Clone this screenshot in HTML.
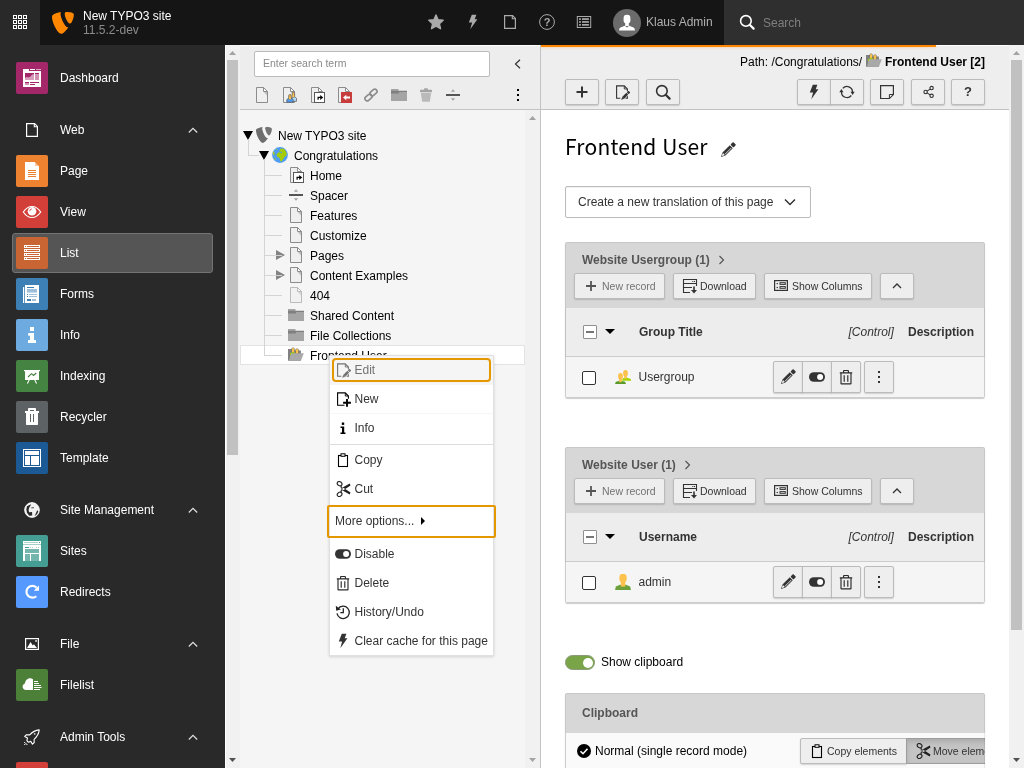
<!DOCTYPE html><html lang="en"><head><meta charset="utf-8"><title>Frontend User - TYPO3 CMS</title><style>*{box-sizing:border-box;margin:0;padding:0}
html,body{width:1024px;height:768px;overflow:hidden;background:#fff}
body{will-change:transform;font-family:"Liberation Sans",Arial,sans-serif;font-size:12px;color:#000;position:relative;line-height:16px}
svg{display:block}
i{display:block;font-style:normal}
/* topbar */
#topbar{position:absolute;left:0;top:0;width:1024px;height:45px;background:#151515}
#tgl{position:absolute;left:0;top:0;width:40px;height:45px;background:#292929}
#tgl svg{position:absolute;left:12px;top:14px}
#logo{position:absolute;left:52px;top:12px}
#site{position:absolute;left:83px;top:8px;color:#fff;line-height:14px}
#site .sn{font-size:12px;position:absolute;top:1px;white-space:nowrap}
#site .sv{font-size:12px;color:#8c8c8c;position:absolute;top:15px;white-space:nowrap}
.ti{position:absolute;top:14px;width:16px;height:16px}
#avatar{position:absolute;left:613px;top:9px;width:28px;height:28px;border-radius:50%;background:#6b6b6b;overflow:hidden}
#uname{position:absolute;left:646px;top:14px;color:#b0b0b0;white-space:nowrap}
#search{position:absolute;left:724px;top:0;width:300px;height:45px;background:#2f2f2f}
#search .si{position:absolute;left:15px;top:14px}
#search .sp{position:absolute;left:39px;top:15px;color:#7f7f7f}
/* sidebar */
#side{position:absolute;left:0;top:45px;width:225px;height:723px;background:#292929;overflow:hidden}
.mod{position:absolute;left:12px;width:201px;height:40px;border:1px solid transparent;border-radius:3px;color:#fff;margin-top:-45px}
.mod.act{background:#555;border-color:#737373}
.mi{position:absolute;left:3px;top:3px;width:32px;height:32px;border-radius:2px;overflow:hidden}
.ml{position:absolute;left:47px;top:11px;white-space:nowrap;color:#fff}
.mh{position:absolute;left:12px;width:201px;height:20px;margin-top:-45px}
.mh .ml{top:2px;left:48px}
.mhi{position:absolute;left:12px;top:2px;width:16px;height:16px}
.mchev{position:absolute;left:176px;top:2px}
/* scrollbar */
.sb{position:absolute;width:15px;background:#f1f1f1}
.sb .th{position:absolute;left:2px;width:11px;background:#c1c1c1}
.sb .up,.sb .dn{position:absolute;left:4px;width:7px;height:4px}
.sb .up{top:6px;background:#a3a3a3;clip-path:polygon(50% 0,100% 100%,0 100%)}
.sb .dn{bottom:6px;background:#505050;clip-path:polygon(0 0,100% 0,50% 100%)}
/* tree */
#tree{position:absolute;left:240px;top:45px;width:300px;height:723px;background:#f5f5f5;overflow:hidden}
#ttool{position:absolute;left:0;top:0;width:300px;height:65px;background:#ededed;border-bottom:1px solid #c3c3c3;border-top:1px solid #fff}
.inp{position:absolute;left:14px;top:5px;width:236px;height:26px;border:1px solid #bbb;border-radius:2px;background:#fff;color:#8a8a8a;padding:3px 8px;line-height:16px;font-size:10.5px}
.tcl{position:absolute;left:274px;top:13px}
.tbi{position:absolute;top:41px;width:16px;height:16px}
.tdots{position:absolute;left:277px;top:43px;width:2px}
.tdots i{width:2px;height:2px;background:#000;margin-bottom:3px}
.tr{position:absolute;left:0;width:285px;height:20px;margin-top:-45px}
.tr.sel{background:#fff;border:1px solid #e3e3e3}
.tr.sel>*{margin-top:-1px;margin-left:-1px}
.tic{position:absolute;top:2px;width:16px;height:16px}
.tl{position:absolute;top:3px;white-space:nowrap;color:#000}
.tg{position:absolute;width:0;height:0}
.tg.open{top:6px;border-left:5px solid transparent;border-right:5px solid transparent;border-top:9px solid #000}
.tg.closed{top:5px;border-top:5px solid transparent;border-bottom:5px solid transparent;border-left:9px solid #848484}
.ln{position:absolute;background:#d4d4d4;z-index:2}
#tree>.ln{margin-top:-45px}
.ln.v{width:1px}
.ln.h{height:1px}
#vdiv{position:absolute;left:540px;top:45px;width:1px;height:723px;background:#c3c3c3}
/* content */
#content{position:absolute;left:541px;top:45px;width:468px;height:723px;background:#fff;overflow:hidden}
#prog{position:absolute;left:0;top:0;width:395px;height:2px;background:#ff8700;z-index:3;box-shadow:0 0 3px rgba(255,135,0,.45)}
#dochead{position:absolute;left:0;top:0;width:468px;height:65px;background:#eee;border-bottom:1px solid #c3c3c3;border-top:1px solid #fff}#dochead>*{margin-top:-1px}
#path{position:absolute;right:24px;top:8px;white-space:nowrap;line-height:16px;font-size:12px}
#path .pi{display:inline-block;vertical-align:-3px;width:16px;height:16px;margin:0 3px 0 .5px}
.btn{position:absolute;top:34px;height:26px;border:1px solid #bbb;border-radius:2px;background:#eee;box-shadow:0 1px 1.5px rgba(0,0,0,.16)}
.btn svg{position:absolute;left:50%;top:50%;margin:-8px 0 0 -8px}
.btn .q{position:absolute;left:0;right:0;top:4px;text-align:center;font-size:13px;color:#333}
.gl{border-top-right-radius:0!important;border-bottom-right-radius:0!important}
.gr{border-top-left-radius:0!important;border-bottom-left-radius:0!important}
.gm{border-radius:0!important}
#body{position:absolute;left:0;top:65px;width:468px;height:658px}
h1{position:absolute;left:24px;top:21px;letter-spacing:.22px;word-spacing:.8px;font-family:"Noto Sans CJK JP","Noto Sans CJK SC","DejaVu Sans",sans-serif;font-weight:normal;font-size:21px;line-height:30px;white-space:nowrap;color:#000}
.h1p{position:absolute;left:155px;top:11px}
#sel{position:absolute;left:24px;top:76px;width:246px;height:32px;border:1px solid #bbb;border-radius:2px;background:#fff;box-shadow:inset 0 1px 1px rgba(0,0,0,.06);padding:7px 12px;color:#333;white-space:nowrap}
.selc{position:absolute;right:14px;top:9px}
.panel{position:absolute;left:24px;width:420px;height:156px;background:#fafafa;border-radius:2px;overflow:hidden;box-shadow:0 1px 1px rgba(0,0,0,.2)}
.ph{position:absolute;left:0;top:0;width:420px;height:66px;background:#d7d7d7}
.pt{position:absolute;left:17px;top:10px;font-weight:bold;color:#555;white-space:nowrap}
.pc{display:inline-block;margin-left:8px;vertical-align:-2px}
.b2,.b4{position:absolute;top:31px;height:26px;border:1px solid #bbb;border-radius:2px;background:#eee;box-shadow:0 1px 1.5px rgba(0,0,0,.16);white-space:nowrap;color:#333;font-size:10.5px;line-height:24px;padding-left:8px}
.bi{display:inline-block;vertical-align:-4px;margin-right:2px}
.thd{position:absolute;left:0;top:66px;width:420px;height:49px;background:#ededed;border-bottom:1px solid #ccc;border-left:1px solid #d0d0d0;border-right:1px solid #d0d0d0}.thd>*{margin-left:-1px}
.thd b,.thd em{position:absolute;top:16px;white-space:nowrap;color:#333}
.cb{position:absolute;left:17px;top:17px;width:14px;height:14px;border:1px solid #333;border-radius:2px;background:#fff}
.thd .cb{border-color:#8f8f8f;top:17px;left:18px;border-radius:1px}
.cb.minus i{position:absolute;left:2px;top:5px;width:8px;height:2px;background:#767676}
.caret{position:absolute;left:40px;top:21px;border-left:5px solid transparent;border-right:5px solid transparent;border-top:5px solid #000}
.trw{position:absolute;left:0;top:115px;width:420px;height:41px;background:#f5f5f5;border:1px solid #ddd;border-top:0}
.trw .cb{top:14px;left:16px}
.ri{position:absolute;left:49px;top:12px}
.rl{position:absolute;left:72.5px;top:12px;color:#333}
.b3{position:absolute;top:4px;width:30px;height:32px;border:1px solid #bbb;border-radius:2px;background:#eee;margin-left:-1px;box-shadow:0 1px 1.5px rgba(0,0,0,.16)}
.b3 svg{position:absolute;left:6px;top:7px}
.vd{position:absolute;left:13px;top:9px}
.vd i{width:2px;height:2px;background:#333;margin-bottom:3px}
#clipt{position:absolute;left:60px;top:544px;white-space:nowrap;color:#000}
.sw{position:absolute;left:-36px;top:1px;width:30px;height:15px;border-radius:8px;background:#79a548;border:1px solid #8a9a7a}
.sw i{position:absolute;right:1px;top:1.5px;width:10px;height:10px;border-radius:50%;background:#fff}
.crow{position:absolute;left:0;top:40px;width:420px;height:51px;background:#fafafa;border-left:1px solid #ddd}
.cki{position:absolute;left:9.500px;top:10px}
.ckl{position:absolute;left:29px;top:10px;white-space:nowrap}
.b4{top:5px}
.b4.on{background:#c4c4c4;border-color:#9c9c9c;box-shadow:inset 0 3px 5px rgba(0,0,0,.125)}
/* ctx */
#ctx{position:absolute;left:329px;top:355px;width:165px;height:301px;background:#fff;border:1px solid #e0e0e0;box-shadow:0 1px 3px rgba(0,0,0,.15);border-radius:1px}
.ci{position:absolute;left:0;width:163px;height:19px;padding-left:24.5px;margin-top:1px;white-space:nowrap;color:#333;line-height:16px}
.ci.dis{color:#737373}
.cic{position:absolute;left:5px;top:0;width:16px;height:16px}
.cdiv{position:absolute;left:0;width:163px;height:1px;background:#ddd;margin-top:1px}.cfl{position:absolute;left:0;width:163px;height:1px;background:#f6f6f6}
.focus{position:absolute;border:2px solid #e59700;border-radius:4px}
.more{display:inline-block;margin-left:3px;border-top:4px solid transparent;border-bottom:4px solid transparent;border-left:4px solid #000;vertical-align:0}
#ctx .edbg{position:absolute;left:0;top:0;width:163px;height:29px;background:#f5f5f5}
.panel::after{content:"";position:absolute;left:0;top:0;right:0;bottom:0;border:1px solid rgba(0,0,0,.07);border-radius:2px}
</style></head><body>
<div id="topbar">
<div id="tgl"><svg width="16" height="16" viewBox="0 0 16 16" ><rect x="1.5" y="1.5" width="3" height="3" fill="none" stroke="#fff" stroke-width="1"/><rect x="6.5" y="1.5" width="3" height="3" fill="none" stroke="#fff" stroke-width="1"/><rect x="11.5" y="1.5" width="3" height="3" fill="none" stroke="#fff" stroke-width="1"/><rect x="1.5" y="6.5" width="3" height="3" fill="none" stroke="#fff" stroke-width="1"/><rect x="6.5" y="6.5" width="3" height="3" fill="none" stroke="#fff" stroke-width="1"/><rect x="11.5" y="6.5" width="3" height="3" fill="none" stroke="#fff" stroke-width="1"/><rect x="1.5" y="11.5" width="3" height="3" fill="none" stroke="#fff" stroke-width="1"/><rect x="6.5" y="11.5" width="3" height="3" fill="none" stroke="#fff" stroke-width="1"/><rect x="11.5" y="11.5" width="3" height="3" fill="none" stroke="#fff" stroke-width="1"/></svg></div>
<div id="logo"><svg width="22" height="22" viewBox="0.8 0.9 14.2 14.2" ><path fill="#ff8700" d="M11.4 10.6c-.2.1-.4.1-.6.1-1.8 0-4.5-6.400-4.500-8.500 0-.8.200-1.000.400-1.300C4.500 1.200 1.900 2.000 1.100 3.000c-.2.300-.3.700-.3 1.200 0 3.300 3.500 10.800 6.000 10.800 1.200 0 3.100-1.900 4.600-4.400"/><path fill="#ff8700" d="M10.300.9c2.300 0 4.600.400 4.600 1.700 0 2.600-1.700 5.800-2.500 5.800-1.500 0-3.400-4.200-3.400-6.300C9.000 1.200 9.400.9 10.300.9"/></svg></div>
<div id="site"><div class="sn">New TYPO3 site</div><div class="sv">11.5.2-dev</div></div>
<span class="ti" style="left:428px"><svg width="16" height="16" viewBox="0 0 16 16" ><path fill="#aaa" stroke="#aaa" stroke-width="1.400" stroke-linejoin="round" d="M8 1l2.100 4.700 5.100.5-3.800 3.500 1.100 5L8 12.100 3.500 14.700l1.100-5L.8 6.200l5.100-.5z"/></svg></span>
<span class="ti" style="left:465px"><svg width="16" height="16" viewBox="0 0 16 16" ><path fill="#aaa" d="M6.800.8h4.600L9.700 5.300h2.700L5.300 15.300l1.800-6.800H3.800z"/></svg></span>
<span class="ti" style="left:502px"><svg width="16" height="16" viewBox="0 0 16 16" ><path fill="none" stroke="#aaa" stroke-width="1.200" d="M2.600 1.600h8l2.800 2.800v10H2.600z"/><path fill="none" stroke="#aaa" stroke-width="1.100" d="M10.300 1.800v3.000h3.000"/></svg></span>
<span class="ti" style="left:539px"><svg width="16" height="16" viewBox="0 0 16 16" ><circle cx="8" cy="8" r="7.400" fill="none" stroke="#aaa" stroke-width="1"/><text x="8" y="12" text-anchor="middle" font-family="Liberation Sans" font-weight="bold" font-size="11" fill="#aaa">?</text></svg></span>
<span class="ti" style="left:576px"><svg width="16" height="16" viewBox="0 0 16 16" ><rect x="1.300" y="2.500" width="13.400" height="11" fill="none" stroke="#aaa" stroke-width="1"/><rect x="3.100" y="4.2" width="1.800" height="1.700" fill="#aaa"/><rect x="6" y="4.2" width="6.900" height="1.700" fill="#aaa"/><rect x="3.100" y="7.1" width="1.800" height="1.700" fill="#aaa"/><rect x="6" y="7.1" width="6.900" height="1.700" fill="#aaa"/><rect x="3.100" y="10" width="1.800" height="1.700" fill="#aaa"/><rect x="6" y="10" width="6.900" height="1.700" fill="#aaa"/></svg></span>
<div id="avatar"><svg width="28" height="28" viewBox="0 0 28 28" ><rect x="10.600" y="5.800" width="6.800" height="8.600" rx="3.200" fill="#fff"/><rect x="12.200" y="13" width="3.600" height="4" fill="#fff"/><path fill="#fff" d="M6 21.500c.2-1.800.6-2.700 1.500-3.100l4.300-1.600 2.200 1.700 2.200-1.700 4.300 1.600c.9.400 1.300 1.300 1.500 3.100z"/></svg></div><div id="uname">Klaus Admin</div>
<div id="search"><span class="si"><svg width="16" height="16" viewBox="0 0 16 16" ><circle cx="6.900" cy="6.900" r="5.300" fill="none" stroke="#fff" stroke-width="1.600"/><path d="M11.200 11.200l3.400 3.400" stroke="#fff" stroke-width="2.200" stroke-linecap="round"/></svg></span><span class="sp">Search</span></div>
</div>
<div id="side">
<div class="mod" style="top:58px"><span class="mi" style="background:#a4276a"><svg width="32" height="32" viewBox="0 0 32 32" ><path fill="#fff" d="M7 7h6v2h12v16H7z"/><rect x="14" y="7" width="5" height="1" fill="#fff"/><rect x="20" y="7" width="5" height="1" fill="#fff" opacity=".6"/><rect x="9" y="11" width="9" height="7" fill="#a4276a"/><path fill="#fff" opacity=".55" d="M9 16l2-1.200 1.500.8 2-1 1.500-1.800 2-.8v6H9z"/><rect x="19" y="11" width="4" height="7" fill="#a4276a" opacity=".5"/><rect x="19" y="11" width="4" height="1" fill="#a4276a"/><rect x="9" y="20" width="4" height="3" fill="#a4276a" opacity=".5"/><rect x="9" y="20" width="4" height="1" fill="#a4276a"/><rect x="14" y="20" width="9" height="1" fill="#a4276a"/><rect x="14" y="22" width="5" height="1" fill="#a4276a"/></svg></span><span class="ml">Dashboard</span></div>
<div class="mh" style="top:120px"><span class="mhi"><svg width="16" height="16" viewBox="0 0 16 16" ><path fill="none" stroke="#fff" stroke-width="1.200" d="M2.600 1.600h8l2.800 2.800v10H2.600z"/><path fill="none" stroke="#fff" stroke-width="1.100" d="M10.300 1.800v3.000h3.000"/></svg></span><span class="ml">Web</span><span class="mchev"><svg width="10" height="16" viewBox="0 0 10 16" ><path d="M.8 10.500L5 6.300l4.200 4.200" fill="none" stroke="#e0e0e0" stroke-width="1.200"/></svg></span></div>
<div class="mod" style="top:151px"><span class="mi" style="background:#ed8330"><svg width="32" height="32" viewBox="0 0 32 32" ><path fill="#fff" d="M9 7h10l4 4v14H9z"/><path fill="#ed8330" opacity=".45" d="M19 7v4h4z"/><path fill="#ed8330" d="M19 7l4 4v-4z"/><rect x="12" y="15" width="8" height="1" fill="#ed8330"/><rect x="12" y="17" width="8" height="1" fill="#ed8330"/><rect x="12" y="19" width="8" height="1" fill="#ed8330"/><rect x="12" y="21" width="8" height="1" fill="#ed8330"/></svg></span><span class="ml">Page</span></div>
<div class="mod" style="top:192px"><span class="mi" style="background:#d13f38"><svg width="32" height="32" viewBox="0 0 32 32" ><path fill="none" stroke="#fff" stroke-width="1.200" d="M7.300 16C10 12 13 10.500 16 10.500S22 12 24.700 16C22 20 19 21.500 16 21.500S10 20 7.300 16z"/><circle cx="16" cy="15.200" r="4.300" fill="#fff"/><path fill="none" stroke="#d13f38" stroke-width=".9" d="M13.800 15.200a2.300 2.300 0 0 1 2.000-2.300"/></svg></span><span class="ml">View</span></div>
<div class="mod act" style="top:233px"><span class="mi" style="background:#c96533"><svg width="32" height="32" viewBox="0 0 32 32" ><rect x="8" y="8" width="16" height="3" fill="#fff"/><rect x="9" y="9" width="1" height="1" fill="#c96533"/><rect x="11" y="9" width="12" height="1" fill="#c96533"/><rect x="8" y="12" width="16" height="3" fill="#fff"/><rect x="9" y="13" width="1" height="1" fill="#c96533"/><rect x="11" y="13" width="12" height="1" fill="#c96533"/><rect x="8" y="16" width="16" height="3" fill="#fff"/><rect x="9" y="17" width="1" height="1" fill="#c96533"/><rect x="11" y="17" width="12" height="1" fill="#c96533"/><rect x="8" y="20" width="16" height="3" fill="#fff"/><rect x="9" y="21" width="1" height="1" fill="#c96533"/><rect x="11" y="21" width="12" height="1" fill="#c96533"/></svg></span><span class="ml">List</span></div>
<div class="mod" style="top:274px"><span class="mi" style="background:#3d80b5"><svg width="32" height="32" viewBox="0 0 32 32" ><rect x="7" y="9" width="1.200" height="16" fill="#fff"/><rect x="9" y="7" width="14" height="18" fill="#fff"/><rect x="11" y="9" width="7" height="1" fill="#3d80b5"/><rect x="11" y="11" width="10" height="3.600" fill="#3d80b5" opacity=".5"/><rect x="11" y="16" width="1" height="1" fill="#3d80b5"/><rect x="13" y="16" width="8" height="1" fill="#3d80b5" opacity=".5"/><rect x="11" y="18" width="1" height="1" fill="#3d80b5"/><rect x="13" y="18" width="8" height="1" fill="#3d80b5" opacity=".5"/><rect x="11" y="21" width="4" height="2" fill="#3d80b5"/><rect x="16" y="21" width="4" height="2" fill="#3d80b5" opacity=".5"/></svg></span><span class="ml">Forms</span></div>
<div class="mod" style="top:315px"><span class="mi" style="background:#6daae0"><svg width="32" height="32" viewBox="0 0 32 32" ><rect x="14" y="8" width="4" height="4" rx=".3" fill="#fff"/><path fill="#fff" d="M12.200 14H18v7h2v3h-8v-3h2v-4.200h-1.800z"/></svg></span><span class="ml">Info</span></div>
<div class="mod" style="top:356px"><span class="mi" style="background:#448341"><svg width="32" height="32" viewBox="0 0 32 32" ><rect x="8" y="10" width="16" height="1.200" fill="#fff"/><rect x="9" y="11" width="14" height="9" fill="#fff"/><path d="M12 17l3.500-3.300 2 1.800 2.800-2.500" fill="none" stroke="#448341" stroke-width="1.100"/><path d="M13.200 20l-1.800 3.600M18.800 20l1.800 3.600" stroke="#fff" stroke-width="1.100" fill="none"/></svg></span><span class="ml">Indexing</span></div>
<div class="mod" style="top:397px"><span class="mi" style="background:#5d6365"><svg width="32" height="32" viewBox="0 0 32 32" ><path fill="#fff" d="M12 10V7.800c0-.5.300-.8.800-.8h6.400c.5 0 .8.300.8.800V10h3v2H9v-2z"/><rect x="14" y="9" width="4" height="1" fill="#5d6365"/><path fill="#fff" d="M10 12h12v11.200c0 .5-.3.800-.8.800H10.800c-.5 0-.8-.3-.8-.8z"/><rect x="14" y="13" width="1" height="8" fill="#5d6365"/><rect x="17" y="13" width="1" height="8" fill="#5d6365"/></svg></span><span class="ml">Recycler</span></div>
<div class="mod" style="top:438px"><span class="mi" style="background:#1c5a96"><svg width="32" height="32" viewBox="0 0 32 32" ><rect x="7.500" y="7.500" width="17" height="17" fill="none" stroke="#fff" stroke-width="1"/><rect x="9" y="9" width="14" height="4" fill="#fff"/><rect x="9" y="14" width="5" height="9" fill="#fff"/><rect x="15" y="14" width="8" height="9" fill="#fff"/></svg></span><span class="ml">Template</span></div>
<div class="mh" style="top:500px"><span class="mhi"><svg width="16" height="16" viewBox="0 0 16 16" ><circle cx="8" cy="8" r="7.400" fill="#f2f2f2" stroke="#fff" stroke-width=".8"/><path fill="#292929" d="M3 4.200L7 2.300 6.500 3.800 5.300 5.600 4.600 8l.5 2.300 3-.3.100 3.500-3 .2L3 10.800 2.300 7.500zM7.300 5.400l2.700-.2-.4 1.100-2.400-.100zM13.200 8.300l1.100 1-1.100 2.700-2.700 2.200 1.400-2.900z"/></svg></span><span class="ml">Site Management</span><span class="mchev"><svg width="10" height="16" viewBox="0 0 10 16" ><path d="M.8 10.500L5 6.300l4.200 4.200" fill="none" stroke="#e0e0e0" stroke-width="1.200"/></svg></span></div>
<div class="mod" style="top:531px"><span class="mi" style="background:#459e93"><svg width="32" height="32" viewBox="0 0 32 32" ><rect x="7" y="6" width="18" height="3" fill="#fff"/><rect x="8" y="7" width="14" height="1" fill="#459e93" opacity=".45"/><rect x="23" y="7" width="1" height="1" fill="#459e93"/><rect x="7" y="9" width="18" height="1" fill="#fff" opacity=".5"/><rect x="7" y="10" width="18" height="16" fill="#fff"/><rect x="9" y="12" width="4" height="1" fill="#459e93"/><rect x="14" y="12" width="1" height="1" fill="#459e93" opacity=".45"/><rect x="16" y="12" width="1" height="1" fill="#459e93" opacity=".45"/><rect x="20" y="12" width="1" height="1" fill="#459e93" opacity=".45"/><rect x="22" y="12" width="1" height="1" fill="#459e93" opacity=".45"/><rect x="9" y="14" width="14" height="4" fill="#459e93" opacity=".75"/><rect x="9" y="19" width="5" height="7" fill="#459e93" opacity=".75"/><rect x="15" y="19" width="8" height="7" fill="#459e93" opacity=".75"/></svg></span><span class="ml">Sites</span></div>
<div class="mod" style="top:572px"><span class="mi" style="background:#5599ff"><svg width="32" height="32" viewBox="0 0 32 32" ><path d="M20.300 20.200a5.900 5.900 0 1 1 .2-8.600" fill="none" stroke="#fff" stroke-width="2.200"/><path fill="#fff" d="M23 9.600v5.200h-5.200z"/></svg></span><span class="ml">Redirects</span></div>
<div class="mh" style="top:634px"><span class="mhi"><svg width="16" height="16" viewBox="0 0 16 16" ><rect x="1.600" y="2.600" width="12.800" height="10.800" fill="none" stroke="#fff" stroke-width="1.200"/><path fill="#fff" d="M3 12l3.600-6 2.200 3.500 1.100-1.200L13 12z"/><rect x="11.200" y="4" width="1.700" height="1.900" fill="#d0d0d0"/></svg></span><span class="ml">File</span><span class="mchev"><svg width="10" height="16" viewBox="0 0 10 16" ><path d="M.8 10.500L5 6.300l4.200 4.200" fill="none" stroke="#e0e0e0" stroke-width="1.200"/></svg></span></div>
<div class="mod" style="top:665px"><span class="mi" style="background:#4c7f38"><svg width="32" height="32" viewBox="0 0 32 32" ><path fill="#fff" d="M17 21h-7c-2 0-3.400-1.500-3.400-3.300 0-1.500 1-2.700 2.300-3.100C9.300 11.500 11.300 9.200 14 9.200c1.100 0 2.200.4 3 1.100z"/><rect x="18" y="12" width="4" height="1" fill="#fff"/><rect x="18" y="14" width="5" height="1" fill="#fff"/><rect x="18" y="16" width="7" height="1" fill="#fff"/><rect x="18" y="18" width="7.5" height="1" fill="#fff"/><rect x="18" y="20" width="6" height="1" fill="#fff"/></svg></span><span class="ml">Filelist</span></div>
<div class="mh" style="top:727px"><span class="mhi"><svg width="16" height="16" viewBox="0 0 16 16" ><path fill="none" stroke="#fff" stroke-width="1.100" stroke-linejoin="round" d="M15.200.9c-3.500.3-7 2.200-9.500 5.000l-3.200-.2-1.800 1.700 2.800 1.500-.6 2.800 1.300 1.500 2.700-.8 1.500 2.800 1.800-1.700-.100-3.200c2.800-2.500 4.800-6 5.100-9.400z"/><circle cx="10.700" cy="4.900" r=".9" fill="#d0d0d0"/><g fill="#fff"><rect x=".2" y="13" width="1" height="1"/><rect x="1.400" y="14.100" width="1" height="1"/><rect x=".2" y="15" width="1" height="1"/><rect x="2.400" y="15" width="1" height="1"/></g></svg></span><span class="ml">Admin Tools</span><span class="mchev"><svg width="10" height="16" viewBox="0 0 10 16" ><path d="M.8 10.500L5 6.300l4.200 4.200" fill="none" stroke="#e0e0e0" stroke-width="1.200"/></svg></span></div>
<div class="mod" style="top:758px"><span class="mi" style="background:#d3403a"></span><span class="ml">Maintenance</span></div>
</div>
<div class="sb" style="left:225px;top:45px;height:723px;box-shadow:inset 1px 0 0 #fff"><i class="up"></i><i class="th" style="top:15px;height:395px"></i><i class="dn"></i></div>
<div id="tree">
<div id="ttool"><div class="inp">Enter search term</div>
<span class="tcl"><svg width="8" height="10" viewBox="0 0 8 10" ><path d="M6 .8L1.500 5 6 9.200" fill="none" stroke="#333" stroke-width="1.200"/></svg></span>
<span class="tbi" style="left:14.0px"><svg width="16" height="16" viewBox="0 0 16 16" ><g opacity="1"><path fill="#efefef" stroke="#8c8c8c" stroke-width="1" d="M2.500.5H9.500L13.500 4.500v11h-11z"/><path fill="#bdbdbd" d="M9.800 5H13v3.400z"/><path fill="#fff" stroke="#8c8c8c" stroke-width="1" stroke-linejoin="round" d="M9.500.5v4h4z"/></g></svg></span>
<span class="tbi" style="left:41.3px"><svg width="16" height="16" viewBox="0 0 16 16" ><path fill="#efefef" stroke="#8c8c8c" stroke-width="1" d="M2.500.5H9.500L13.500 4.500v11h-11z"/><path fill="#bdbdbd" d="M9.800 5H13v3.400z"/><path fill="#fff" stroke="#8c8c8c" stroke-width="1" stroke-linejoin="round" d="M9.500.5v4h4z"/><g stroke="#5f5f5f" stroke-width=".8" stroke-linejoin="round"><path fill="#b5dcfa" d="M11 14.300V9.800h2.200c1.400.3 2.400 1 2.400 2.200v2.300z"/><rect x="11.200" y="5.300" width="2.400" height="4.700" rx="1.100" fill="#fcc24d"/><path fill="#4a9cf5" d="M5.800 15.200v-2c0-1.200 1.200-1.800 2.200-2.000h2c1 .2 2.200.8 2.200 2.000v2z"/><rect x="7.700" y="7.600" width="2.500" height="4.600" rx="1.100" fill="#fcc24d"/></g><rect x="7.900" y="10.500" width="2.100" height="1.800" fill="#fcc24d"/><rect x="11.400" y="8.500" width="2" height="1.600" fill="#fcc24d"/></svg></span>
<span class="tbi" style="left:68.7px"><svg width="16" height="16" viewBox="0 0 16 16" ><path fill="#efefef" stroke="#8c8c8c" stroke-width="1" d="M2.500.5H9.500L13.500 4.500v11h-11z"/><path fill="#bdbdbd" d="M9.800 5H13v3.400z"/><path fill="#fff" stroke="#8c8c8c" stroke-width="1" stroke-linejoin="round" d="M9.500.5v4h4z"/><rect x="5.500" y="5.500" width="10" height="10" fill="#fff" stroke="#595959" stroke-width="1"/><path fill="#000" d="M11.200 7.900l3 2.500-3 2.500v-1.900H9.700v1.800H8.500v-3h2.700z"/></svg></span>
<span class="tbi" style="left:96.0px"><svg width="16" height="16" viewBox="0 0 16 16" ><path fill="#efefef" stroke="#8c8c8c" stroke-width="1" d="M2.500.5H9.500L13.500 4.500v11h-11z"/><path fill="#bdbdbd" d="M9.800 5H13v3.400z"/><path fill="#fff" stroke="#8c8c8c" stroke-width="1" stroke-linejoin="round" d="M9.500.5v4h4z"/><rect x="5" y="5" width="11" height="11" fill="#c83c3c"/><path fill="#fff" d="M10.300 7.700L7 10.500l3.300 2.800v-1.900h3.700V9.600h-3.700z"/></svg></span>
<span class="tbi" style="left:123.3px"><svg width="16" height="16" viewBox="0 0 16 16" ><g fill="none" stroke="#8c8c8c" stroke-width="1.700" stroke-linecap="round"><rect x="1.600" y="8.300" width="7.800" height="4.400" rx="2.200" transform="rotate(-40 5.500 10.500)"/><rect x="6.600" y="3.300" width="7.800" height="4.400" rx="2.200" transform="rotate(-40 10.500 5.500)"/></g></svg></span>
<span class="tbi" style="left:150.6px"><svg width="16" height="16" viewBox="0 0 16 16" ><rect x="0" y="2" width="7.500" height="3" fill="#a5a5a5"/><rect x="0" y="5" width="16" height="9" fill="#a5a5a5"/><path fill="#7f7f7f" d="M0 3.800h16v1.300H8.500l-1 1.400H0z"/></svg></span>
<span class="tbi" style="left:178.0px"><svg width="16" height="16" viewBox="0 0 16 16" ><rect x="6.200" y="1.300" width="3.600" height="2" fill="#a3a3a3"/><rect x="2" y="2.800" width="12" height="2.500" rx=".4" fill="#a3a3a3"/><path fill="#bababa" d="M2.800 6h10.400l-1.400 8.700H4.200z"/></svg></span>
<span class="tbi" style="left:205.3px"><svg width="16" height="16" viewBox="0 0 16 16" ><rect x="1" y="7" width="14" height="2" fill="#555"/><path fill="#a5a5a5" d="M8 2.200l2.200 2.600h-4.400zM8 13.800l2.200-2.600h-4.400z"/></svg></span>
<span class="tdots"><i></i><i></i><i></i></span>
</div>
<div class="ln v" style="left:8px;top:139px;height:16px"></div><div class="ln h" style="left:8px;top:155px;width:11px"></div>
<div class="ln v" style="left:24px;top:159px;height:196px"></div>
<div class="tr" style="top:125px"><span class="tg open" style="left:3px"></span><span class="tic" style="left:16px"><svg width="16" height="16" viewBox="0.8 0.9 14.2 14.2" ><path fill="#6e6e6e" d="M11.4 10.6c-.2.1-.4.1-.6.1-1.8 0-4.5-6.400-4.500-8.500 0-.8.200-1.000.400-1.300C4.500 1.200 1.900 2.000 1.100 3.000c-.2.300-.3.700-.3 1.200 0 3.300 3.500 10.800 6.000 10.800 1.200 0 3.100-1.900 4.600-4.400"/><path fill="#747474" d="M10.300.9c2.300 0 4.600.400 4.600 1.700 0 2.600-1.700 5.800-2.500 5.800-1.500 0-3.400-4.200-3.400-6.300C9.000 1.200 9.400.9 10.300.9"/></svg></span><span class="tl" style="left:38px">New TYPO3 site</span></div>
<div class="tr" style="top:145px"><span class="tg open" style="left:19px"></span><span class="tic" style="left:32px"><svg width="16" height="16" viewBox="0 0 16 16" ><circle cx="8" cy="8" r="7.900" fill="#4f9cf5"/><path fill="#a5cc0a" d="M8.600 1.500l3.800.6 2.400 4.200-.5 2.500-1.900 1.100-1.200 2.400-1.700 2.300-1.300-.7-.5-2.900-2.400-1.200-.8-2.300L6.500 5.200l3.400.7.300-1.000-2.900-.4zM1.200 4.800l.9-.6.500 1.800-.2 2.600-.9-.5-.5-1.700zM2 10.400l1.100.5.700 1.800-.8.200zM4 2.200l1.200-.5.200.8-1 .4z"/></svg></span><span class="tl" style="left:54px">Congratulations</span></div>
<div class="tr" style="top:165px"><div class="ln h" style="left:24px;top:10px;width:18px"></div><span class="tic" style="left:48px"><svg width="16" height="16" viewBox="0 0 16 16" ><path fill="#efefef" stroke="#8c8c8c" stroke-width="1" d="M2.500.5H9.500L13.500 4.500v11h-11z"/><path fill="#bdbdbd" d="M9.800 5H13v3.400z"/><path fill="#fff" stroke="#8c8c8c" stroke-width="1" stroke-linejoin="round" d="M9.500.5v4h4z"/><rect x="5.500" y="5.500" width="10" height="10" fill="#fff" stroke="#595959" stroke-width="1"/><path fill="#000" d="M11.200 7.900l3 2.500-3 2.500v-1.900H9.700v1.800H8.500v-3h2.700z"/></svg></span><span class="tl" style="left:70px">Home</span></div>
<div class="tr" style="top:185px"><div class="ln h" style="left:24px;top:10px;width:18px"></div><span class="tic" style="left:48px"><svg width="16" height="16" viewBox="0 0 16 16" ><rect x="1" y="7" width="14" height="2" fill="#555"/><path fill="#a5a5a5" d="M8 2.200l2.200 2.600h-4.400zM8 13.800l2.200-2.600h-4.400z"/></svg></span><span class="tl" style="left:70px">Spacer</span></div>
<div class="tr" style="top:205px"><div class="ln h" style="left:24px;top:10px;width:18px"></div><span class="tic" style="left:48px"><svg width="16" height="16" viewBox="0 0 16 16" ><g opacity="1"><path fill="#efefef" stroke="#8c8c8c" stroke-width="1" d="M2.500.5H9.500L13.500 4.500v11h-11z"/><path fill="#bdbdbd" d="M9.800 5H13v3.400z"/><path fill="#fff" stroke="#8c8c8c" stroke-width="1" stroke-linejoin="round" d="M9.500.5v4h4z"/></g></svg></span><span class="tl" style="left:70px">Features</span></div>
<div class="tr" style="top:225px"><div class="ln h" style="left:24px;top:10px;width:18px"></div><span class="tic" style="left:48px"><svg width="16" height="16" viewBox="0 0 16 16" ><g opacity="1"><path fill="#efefef" stroke="#8c8c8c" stroke-width="1" d="M2.500.5H9.500L13.500 4.500v11h-11z"/><path fill="#bdbdbd" d="M9.800 5H13v3.400z"/><path fill="#fff" stroke="#8c8c8c" stroke-width="1" stroke-linejoin="round" d="M9.500.5v4h4z"/></g></svg></span><span class="tl" style="left:70px">Customize</span></div>
<div class="tr" style="top:245px"><div class="ln h" style="left:24px;top:10px;width:18px"></div><span class="tg closed" style="left:36px"></span><span class="tic" style="left:48px"><svg width="16" height="16" viewBox="0 0 16 16" ><g opacity="1"><path fill="#efefef" stroke="#8c8c8c" stroke-width="1" d="M2.500.5H9.500L13.500 4.500v11h-11z"/><path fill="#bdbdbd" d="M9.800 5H13v3.400z"/><path fill="#fff" stroke="#8c8c8c" stroke-width="1" stroke-linejoin="round" d="M9.500.5v4h4z"/></g></svg></span><span class="tl" style="left:70px">Pages</span></div>
<div class="tr" style="top:265px"><div class="ln h" style="left:24px;top:10px;width:18px"></div><span class="tg closed" style="left:36px"></span><span class="tic" style="left:48px"><svg width="16" height="16" viewBox="0 0 16 16" ><g opacity="1"><path fill="#efefef" stroke="#8c8c8c" stroke-width="1" d="M2.500.5H9.500L13.500 4.500v11h-11z"/><path fill="#bdbdbd" d="M9.800 5H13v3.400z"/><path fill="#fff" stroke="#8c8c8c" stroke-width="1" stroke-linejoin="round" d="M9.500.5v4h4z"/></g></svg></span><span class="tl" style="left:70px">Content Examples</span></div>
<div class="tr" style="top:285px"><div class="ln h" style="left:24px;top:10px;width:18px"></div><span class="tic" style="left:48px"><svg width="16" height="16" viewBox="0 0 16 16" ><g opacity="0.55"><path fill="#efefef" stroke="#8c8c8c" stroke-width="1" d="M2.500.5H9.500L13.500 4.500v11h-11z"/><path fill="#bdbdbd" d="M9.800 5H13v3.400z"/><path fill="#fff" stroke="#8c8c8c" stroke-width="1" stroke-linejoin="round" d="M9.500.5v4h4z"/></g></svg></span><span class="tl" style="left:70px">404</span></div>
<div class="tr" style="top:305px"><div class="ln h" style="left:24px;top:10px;width:18px"></div><span class="tic" style="left:48px"><svg width="16" height="16" viewBox="0 0 16 16" ><rect x="0" y="2" width="7.500" height="3" fill="#a5a5a5"/><rect x="0" y="5" width="16" height="9" fill="#a5a5a5"/><path fill="#7f7f7f" d="M0 3.800h16v1.300H8.500l-1 1.400H0z"/></svg></span><span class="tl" style="left:70px">Shared Content</span></div>
<div class="tr" style="top:325px"><div class="ln h" style="left:24px;top:10px;width:18px"></div><span class="tic" style="left:48px"><svg width="16" height="16" viewBox="0 0 16 16" ><rect x="0" y="2" width="7.500" height="3" fill="#a5a5a5"/><rect x="0" y="5" width="16" height="9" fill="#a5a5a5"/><path fill="#7f7f7f" d="M0 3.800h16v1.300H8.500l-1 1.400H0z"/></svg></span><span class="tl" style="left:70px">File Collections</span></div>
<div class="tr sel" style="top:345px"><div class="ln h" style="left:24px;top:10px;width:18px"></div><span class="tic" style="left:48px"><svg width="16" height="16" viewBox="0 0 16 16" ><path fill="#808080" d="M0 2.100h4l1 1.500h7.900v10.200H0z"/><rect x="3.500" y=".4" width="3.100" height="5.200" rx="1.500" fill="#5a5a5a"/><rect x="7.400" y="1.500" width="3.300" height="5.200" rx="1.500" fill="#5a5a5a"/><rect x="3.900" y="1" width="2.300" height="4.600" rx="1.100" fill="#fcc24d"/><rect x="7.800" y="2.100" width="2.500" height="4.600" rx="1.200" fill="#fcc24d"/><path fill="#a5d600" d="M2 8.500V6.500l1.800-1.300h2.400l1.500 1v2.300z"/><path fill="#a9a9a9" d="M3.200 6.300h12.600l-2.900 7.500H.8z"/></svg></span><span class="tl" style="left:70px">Frontend User</span></div>
</div>
<div class="sb" style="left:525px;top:110px;height:658px"><i class="up"></i><i class="dn" style="background:#a3a3a3"></i></div>
<div id="vdiv"></div>
<div id="content">
<div id="prog"></div>
<div id="dochead">
<div id="path">Path: /Congratulations/ <span class="pi"><svg width="16" height="16" viewBox="0 0 16 16" ><path fill="#808080" d="M0 2.100h4l1 1.500h7.900v10.200H0z"/><rect x="3.500" y=".4" width="3.100" height="5.200" rx="1.500" fill="#5a5a5a"/><rect x="7.400" y="1.500" width="3.300" height="5.200" rx="1.500" fill="#5a5a5a"/><rect x="3.900" y="1" width="2.300" height="4.600" rx="1.100" fill="#fcc24d"/><rect x="7.800" y="2.100" width="2.500" height="4.600" rx="1.200" fill="#fcc24d"/><path fill="#a5d600" d="M2 8.500V6.500l1.800-1.300h2.400l1.500 1v2.300z"/><path fill="#a9a9a9" d="M3.200 6.300h12.600l-2.900 7.500H.8z"/></svg></span><b>Frontend User [2]</b></div>
<span class="btn " style="left:24px;width:34px"><svg width="16" height="16" viewBox="0 0 16 16" ><path d="M8 2.500v11M2.500 8h11" stroke="#333" stroke-width="2" fill="none"/></svg></span>
<span class="btn " style="left:64px;width:34px"><svg width="16" height="16" viewBox="0 0 16 16" ><path fill="none" stroke="#333" stroke-width="1.100" d="M6.300 14.200H2.600V1.900H10.300L13.400 5V7.300M13.400 12.200v2.000h-1.800"/><path fill="none" stroke="#333" stroke-width=".9" d="M10.300 2.100v2.900h2.900"/><g transform="translate(14.800 8.200) rotate(45)"><rect x="-1.300" y="-.8" width="2.600" height="2.300" rx=".5" fill="#333"/><rect x="-1.300" y="2.100" width="2.600" height="5.700" fill="#333"/><path fill="#333" d="M-1.300 7.800h2.600L0 10.800z"/></g></svg></span>
<span class="btn " style="left:105px;width:34px"><svg width="16" height="16" viewBox="0 0 16 16" ><circle cx="6.900" cy="6.900" r="5.300" fill="none" stroke="#333" stroke-width="1.600"/><path d="M11.200 11.200l3.400 3.400" stroke="#333" stroke-width="2.200" stroke-linecap="round"/></svg></span>
<span class="btn gl" style="left:256px;width:34px"><svg width="16" height="16" viewBox="0 0 16 16" ><path fill="#333" d="M6.800.8h4.600L9.700 5.300h2.700L5.300 15.300l1.800-6.800H3.800z"/></svg></span>
<span class="btn gr" style="left:289px;width:34px"><svg width="16" height="16" viewBox="0 0 16 16" ><g fill="none" stroke="#333" stroke-width="1.300"><path d="M3.800 4.400A5.500 5.500 0 0 1 13.500 8"/><path d="M12.300 11.500A5.500 5.500 0 0 1 2.500 8"/></g><path fill="#333" d="M11.500 7.700h4.200l-2.100 3.200zM.3 8.300h4.200L2.400 5.100z"/></svg></span>
<span class="btn " style="left:329px;width:34px"><svg width="16" height="16" viewBox="0 0 16 16" ><path fill="none" stroke="#333" stroke-width="1.200" d="M1.600 1.600h12.800v8.900l-4 4H1.600z"/><path fill="#fafafa" stroke="#333" stroke-width="1" d="M14.200 10.500H10.400v3.800z"/></svg></span>
<span class="btn " style="left:370px;width:34px"><svg width="16" height="16" viewBox="0 0 16 16" ><g fill="none" stroke="#333" stroke-width="1.100"><circle cx="11.600" cy="4.100" r="1.700"/><circle cx="5.600" cy="8" r="1.700"/><circle cx="11.600" cy="11.800" r="1.700"/><path d="M7.100 7.100l3-2.000M7.100 8.900l3 2.000"/></g></svg></span>
<span class="btn " style="left:410px;width:34px"><b class="q">?</b></span>
</div>
<div id="body">
<h1>Frontend User <span class="h1p"><svg width="16" height="16" viewBox="0 0 16 16" ><g transform="translate(13.900 2.100) rotate(45)"><rect x="-2.100" y="-1" width="4.200" height="3.800" rx=".9" fill="#333"/><rect x="-2.100" y="3.700" width="4.200" height="10.300" fill="#333"/><path fill="#333" d="M-2.100 14h4.200L0 18.300z"/><path fill="#fff" d="M-1.200 14.300h2.400L.5 16.400h-1z"/><rect x=".5" y="4.600" width=".7" height="8.800" fill="#fff" opacity=".85"/></g></svg></span></h1>
<div id="sel">Create a new translation of this page<span class="selc"><svg width="12" height="12" viewBox="0 0 12 12" ><path d="M1 3.500l5 5 5-5" fill="none" stroke="#333" stroke-width="1.500"/></svg></span></div>
<div class="panel" style="top:132px"><div class="ph"><span class="pt">Website Usergroup (1)<span class="pc"><svg width="8" height="12" viewBox="0 0 8 12" ><path d="M1.500 2l4 4-4 4" fill="none" stroke="#555" stroke-width="1.200"/></svg></span></span><span class="b2" style="left:9px;width:91px"><span class="bi" style="margin-right:3px"><svg width="16" height="16" viewBox="0 0 16 16" ><path d="M8 3v10M3 8h10" stroke="#555" stroke-width="1.800" fill="none"/></svg></span><span style="color:#737373">New record</span></span><span class="b2" style="left:108px;width:83px"><span class="bi"><svg width="16" height="16" viewBox="0 0 16 16" ><g fill="none" stroke="#333" stroke-width="1.100"><path d="M8 14.500H1.500v-13h13V8"/><path d="M1.500 5.500h13M1.500 9.500h8.500"/></g><rect x="10.300" y="3" width="1" height="1" fill="#333"/><rect x="12" y="3" width="1" height="1" fill="#333"/><path fill="#333" d="M11.200 8.500h1.600V12H15l-3 3.400L9 12h2.200z"/></svg></span>Download</span><span class="b2" style="left:199px;width:108px"><span class="bi" style="margin-right:3px"><svg width="16" height="16" viewBox="0 0 16 16" ><rect x="1.600" y="2.600" width="12.800" height="9.800" fill="none" stroke="#333" stroke-width="1.200"/><g fill="none" stroke="#333" stroke-width="1"><rect x="7" y="4.700" width="5.300" height="1.700"/><rect x="7" y="8.600" width="5.300" height="1.700"/></g><rect x="3.600" y="5" width="1.300" height="1.200" fill="#333"/><rect x="3.600" y="8.900" width="1.300" height="1.200" fill="#333"/></svg></span>Show Columns</span><span class="b2" style="left:315px;width:34px"><span class="bi" style="margin:0"><svg width="16" height="16" viewBox="0 0 16 16" ><path d="M4 10l4-4 4 4" fill="none" stroke="#333" stroke-width="1.300"/></svg></span></span></div><div class="thd"><span class="cb minus"><i></i></span><span class="caret"></span><b style="left:74px">Group Title</b><em style="left:283.500px">[Control]</em><b style="left:343px">Description</b></div><div class="trw"><span class="cb"></span><span class="ri"><svg width="16" height="16" viewBox="0 0 16 16" ><path fill="#a5d600" d="M6.900 11.800L7.800 9.400 10 8.500h1.200l2.600.8L16 10.200v1.600z"/><rect x="9.200" y="6" width="2.600" height="3.600" fill="#fcc24d"/><rect x="8.200" y="1" width="4.600" height="6.400" rx="2.200" fill="#fcc24d"/><path fill="#5a9a28" d="M0 15l.9-2.200L4 11.900h3l3.100.9.900 2.200z"/><rect x="4.100" y="9" width="2.700" height="4.200" fill="#fcc24d"/><rect x="3.200" y="4" width="4.600" height="6.600" rx="2.200" fill="#fcc24d"/></svg></span><span class="rl">Usergroup</span><span class="b3 gl" style="left:208px"><svg width="16" height="16" viewBox="0 0 16 16" ><g transform="translate(13.900 2.100) rotate(45)"><rect x="-2.100" y="-1" width="4.200" height="3.800" rx=".9" fill="#333"/><rect x="-2.100" y="3.700" width="4.200" height="10.300" fill="#333"/><path fill="#333" d="M-2.100 14h4.200L0 18.300z"/><path fill="#fff" d="M-1.200 14.300h2.400L.5 16.400h-1z"/><rect x=".5" y="4.600" width=".7" height="8.800" fill="#fff" opacity=".85"/></g></svg></span><span class="b3 gm" style="left:237px"><svg width="16" height="16" viewBox="0 0 16 16" ><rect x="0" y="3.200" width="16" height="9.600" rx="4.800" fill="#333"/><circle cx="11.100" cy="8" r="3" fill="#fff"/></svg></span><span class="b3 gr" style="left:266px"><svg width="16" height="16" viewBox="0 0 16 16" ><g fill="none" stroke="#2a2a2a" stroke-width="1.150"><path d="M3 4v10.400c0 .3.200.5.500.5h9c.3 0 .5-.2.500-.5V4"/><path d="M1.800 3.800h12.400M5.600 3.800V2c0-.3.200-.5.500-.5h3.800c.3 0 .5.200.5.500v1.800M6.200 6.300v6.400M9.800 6.300v6.400"/></g></svg></span><span class="b3" style="left:299px"><span class="vd"><i></i><i></i><i></i></span></span></div></div>
<div class="panel" style="top:337px"><div class="ph"><span class="pt">Website User (1)<span class="pc"><svg width="8" height="12" viewBox="0 0 8 12" ><path d="M1.500 2l4 4-4 4" fill="none" stroke="#555" stroke-width="1.200"/></svg></span></span><span class="b2" style="left:9px;width:91px"><span class="bi" style="margin-right:3px"><svg width="16" height="16" viewBox="0 0 16 16" ><path d="M8 3v10M3 8h10" stroke="#555" stroke-width="1.800" fill="none"/></svg></span><span style="color:#737373">New record</span></span><span class="b2" style="left:108px;width:83px"><span class="bi"><svg width="16" height="16" viewBox="0 0 16 16" ><g fill="none" stroke="#333" stroke-width="1.100"><path d="M8 14.500H1.500v-13h13V8"/><path d="M1.500 5.500h13M1.500 9.500h8.500"/></g><rect x="10.300" y="3" width="1" height="1" fill="#333"/><rect x="12" y="3" width="1" height="1" fill="#333"/><path fill="#333" d="M11.200 8.500h1.600V12H15l-3 3.400L9 12h2.200z"/></svg></span>Download</span><span class="b2" style="left:199px;width:108px"><span class="bi" style="margin-right:3px"><svg width="16" height="16" viewBox="0 0 16 16" ><rect x="1.600" y="2.600" width="12.800" height="9.800" fill="none" stroke="#333" stroke-width="1.200"/><g fill="none" stroke="#333" stroke-width="1"><rect x="7" y="4.700" width="5.300" height="1.700"/><rect x="7" y="8.600" width="5.300" height="1.700"/></g><rect x="3.600" y="5" width="1.300" height="1.200" fill="#333"/><rect x="3.600" y="8.900" width="1.300" height="1.200" fill="#333"/></svg></span>Show Columns</span><span class="b2" style="left:315px;width:34px"><span class="bi" style="margin:0"><svg width="16" height="16" viewBox="0 0 16 16" ><path d="M4 10l4-4 4 4" fill="none" stroke="#333" stroke-width="1.300"/></svg></span></span></div><div class="thd"><span class="cb minus"><i></i></span><span class="caret"></span><b style="left:74px">Username</b><em style="left:283.500px">[Control]</em><b style="left:343px">Description</b></div><div class="trw"><span class="cb"></span><span class="ri"><svg width="16" height="16" viewBox="0 0 16 16" ><path fill="#6da03c" d="M0 16l.9-3.600 4.100-1.600h6l4.100 1.600.9 3.600z"/><rect x="5.800" y="7" width="4.500" height="5.600" fill="#fcc24d"/><rect x="4.400" y="-.2" width="7.300" height="8.600" rx="3.400" fill="#fcc24d"/></svg></span><span class="rl">admin</span><span class="b3 gl" style="left:208px"><svg width="16" height="16" viewBox="0 0 16 16" ><g transform="translate(13.900 2.100) rotate(45)"><rect x="-2.100" y="-1" width="4.200" height="3.800" rx=".9" fill="#333"/><rect x="-2.100" y="3.700" width="4.200" height="10.300" fill="#333"/><path fill="#333" d="M-2.100 14h4.200L0 18.300z"/><path fill="#fff" d="M-1.200 14.300h2.400L.5 16.400h-1z"/><rect x=".5" y="4.600" width=".7" height="8.800" fill="#fff" opacity=".85"/></g></svg></span><span class="b3 gm" style="left:237px"><svg width="16" height="16" viewBox="0 0 16 16" ><rect x="0" y="3.200" width="16" height="9.600" rx="4.800" fill="#333"/><circle cx="11.100" cy="8" r="3" fill="#fff"/></svg></span><span class="b3 gr" style="left:266px"><svg width="16" height="16" viewBox="0 0 16 16" ><g fill="none" stroke="#2a2a2a" stroke-width="1.150"><path d="M3 4v10.400c0 .3.200.5.500.5h9c.3 0 .5-.2.500-.5V4"/><path d="M1.800 3.800h12.400M5.600 3.800V2c0-.3.200-.5.500-.5h3.800c.3 0 .5.200.5.500v1.800M6.200 6.300v6.400M9.800 6.300v6.400"/></g></svg></span><span class="b3" style="left:299px"><span class="vd"><i></i><i></i><i></i></span></span></div></div>
<div id="clipt"><span class="sw"><i></i></span>Show clipboard</div>
<div class="panel" style="top:583px;height:90px"><div class="ph" style="height:40px"><span class="pt" style="top:12px">Clipboard</span></div><div class="crow"><span class="cki"><svg width="16" height="16" viewBox="0 0 16 16" ><circle cx="8" cy="8" r="7" fill="#000"/><path d="M4.500 8.200l2.500 2.500 4.500-5" fill="none" stroke="#fff" stroke-width="1.600"/></svg></span><span class="ckl">Normal (single record mode)</span><span class="b4 gl" style="left:234px;width:107px"><span class="bi"><svg width="16" height="16" viewBox="0 0 16 16" ><rect x="3.500" y="3.500" width="9" height="11" fill="none" stroke="#000" stroke-width="1.100"/><rect x="6" y="1.800" width="4" height="2.500" fill="#fff" stroke="#000" stroke-width="1"/></svg></span>Copy elements</span><span class="b4 gr on" style="left:340px;width:112px"><span class="bi"><svg width="16" height="16" viewBox="0 0 16 16" ><g fill="none" stroke="#222" stroke-width="1.150"><ellipse cx="4.600" cy="2.700" rx="2.500" ry="2" transform="rotate(35 4.600 2.700)"/><ellipse cx="4.600" cy="13.300" rx="2.500" ry="2" transform="rotate(-35 4.600 13.300)"/><path d="M5.900 4.500L6.600 8 5.900 11.500"/></g><path fill="#222" d="M6.200 7.300l8.500-4.700.8 1.900L8.300 9.200zM6.200 8.700l8.500 4.700.8-1.900L8.300 6.800z"/><rect x="6.100" y="7.500" width="1" height="1" fill="#ddd"/></svg></span>Move elements</span></div></div>
</div>
</div>
<div class="sb" style="left:1009px;top:45px;height:723px"><i class="up"></i><i class="th" style="top:15px;height:570px"></i><i class="dn"></i></div>
<div id="ctx">
<div class="edbg"></div>
<div class="ci dis" style="top:5px"><span class="cic"><svg width="16" height="16" viewBox="0 0 16 16" ><path fill="none" stroke="#737373" stroke-width="1.100" d="M6.300 14.200H2.600V1.900H10.300L13.400 5V7.300M13.400 12.200v2.000h-1.800"/><path fill="none" stroke="#737373" stroke-width=".9" d="M10.300 2.100v2.900h2.900"/><g transform="translate(14.800 8.200) rotate(45)"><rect x="-1.300" y="-.8" width="2.600" height="2.300" rx=".5" fill="#737373"/><rect x="-1.300" y="2.100" width="2.600" height="5.700" fill="#737373"/><path fill="#737373" d="M-1.300 7.800h2.600L0 10.800z"/></g></svg></span>Edit</div>
<div class="focus" style="left:2px;top:2px;width:159px;height:24px"></div>
<div class="ci " style="top:34px"><span class="cic"><svg width="16" height="16" viewBox="0 0 16 16" ><path fill="none" stroke="#000" stroke-width="1.100" d="M9.500 14.200H2.600V1.900H10.300L13.400 5V7.800"/><path fill="none" stroke="#000" stroke-width=".9" d="M10.300 2.100v2.900h2.900"/><path d="M12 7.900v7.800M8.100 11.800h7.800" stroke="#000" stroke-width="1.900" fill="none"/></svg></span>New</div>
<div class="ci " style="top:63px"><span class="cic"><svg width="16" height="16" viewBox="0 0 16 16" ><rect x="6.800" y="2.500" width="2.400" height="2.400" fill="#000"/><path fill="#000" d="M5.500 6.500h3.700v6h1.300v1.500h-5v-1.500h1.500v-4.500h-1.500z"/></svg></span>Info</div>
<div class="cfl" style="top:57px"></div>
<div class="cdiv" style="top:87px"></div>
<div class="ci " style="top:95px"><span class="cic"><svg width="16" height="16" viewBox="0 0 16 16" ><rect x="3.500" y="3.500" width="9" height="11" fill="none" stroke="#000" stroke-width="1.100"/><rect x="6" y="1.800" width="4" height="2.500" fill="#fff" stroke="#000" stroke-width="1"/></svg></span>Copy</div>
<div class="ci " style="top:124px"><span class="cic"><svg width="16" height="16" viewBox="0 0 16 16" ><g fill="none" stroke="#222" stroke-width="1.150"><ellipse cx="4.600" cy="2.700" rx="2.500" ry="2" transform="rotate(35 4.600 2.700)"/><ellipse cx="4.600" cy="13.300" rx="2.500" ry="2" transform="rotate(-35 4.600 13.300)"/><path d="M5.900 4.500L6.600 8 5.900 11.500"/></g><path fill="#222" d="M6.200 7.300l8.500-4.700.8 1.900L8.300 9.200zM6.200 8.700l8.500 4.700.8-1.900L8.300 6.800z"/><rect x="6.100" y="7.500" width="1" height="1" fill="#ddd"/></svg></span>Cut</div>
<div class="cdiv" style="top:148px"></div>
<div class="ci" style="top:156px;padding-left:5px">More options... <span class="more"></span></div>
<div class="focus" style="left:-3px;top:149px;width:169px;height:33px;border-radius:2px"></div>
<div class="ci " style="top:189px"><span class="cic"><svg width="16" height="16" viewBox="0 0 16 16" ><rect x="0" y="3.200" width="16" height="9.600" rx="4.800" fill="#333"/><circle cx="11.100" cy="8" r="3" fill="#fff"/></svg></span>Disable</div>
<div class="ci " style="top:218px"><span class="cic"><svg width="16" height="16" viewBox="0 0 16 16" ><g fill="none" stroke="#2a2a2a" stroke-width="1.150"><path d="M3 4v10.400c0 .3.200.5.500.5h9c.3 0 .5-.2.500-.5V4"/><path d="M1.800 3.800h12.400M5.600 3.800V2c0-.3.200-.5.500-.5h3.800c.3 0 .5.200.5.500v1.800M6.200 6.300v6.400M9.800 6.300v6.400"/></g></svg></span>Delete</div>
<div class="ci " style="top:247px"><span class="cic"><svg width="16" height="16" viewBox="0 0 16 16" ><path d="M3 4.800a6.200 6.200 0 1 1-1 4.600" fill="none" stroke="#222" stroke-width="1.300"/><path fill="#222" d="M.8 1.800l.4 4.900 4.600-1.100z"/><path d="M8.300 4.300V8.600H5.300" stroke="#222" stroke-width="1.300" fill="none"/></svg></span>History/Undo</div>
<div class="ci " style="top:276px"><span class="cic"><svg width="16" height="16" viewBox="0 0 16 16" ><path fill="#333" d="M6.800.8h4.600L9.700 5.300h2.700L5.300 15.300l1.800-6.800H3.800z"/></svg></span>Clear cache for this page</div>
</div>
</body></html>
